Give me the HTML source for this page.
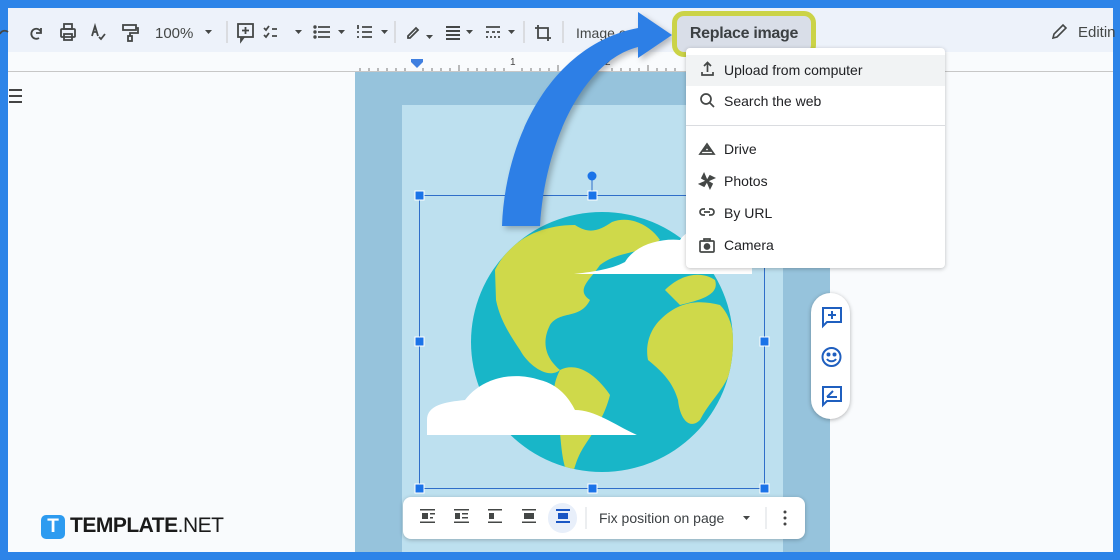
<!DOCTYPE html>
<html><head><meta charset="utf-8"><style>
*{margin:0;padding:0;box-sizing:border-box}
body{width:1120px;height:560px;overflow:hidden;background:#2d84e8;font-family:"Liberation Sans",Arial,sans-serif;position:relative}
.abs{position:absolute}
.ico{fill:none;stroke:#444746;stroke-width:1.8}
</style></head><body>
<div class="abs" style="left:8px;top:8px;width:1105px;height:544px;background:#f9fbfd;overflow:hidden">
 <div class="abs" style="left:0;top:0;width:1105px;height:44px;background:#edf2fa"></div>
 <div class="abs" style="left:0;top:44px;width:1105px;height:20px;background:#f9fbfd;border-bottom:1px solid #c7c7c7"></div>
 <div class="abs" style="left:347px;top:64px;width:475px;height:490px;background:#96c3dc"></div>
 <div class="abs" style="left:394px;top:97px;width:381px;height:460px;background:#bde0ef"></div>
</div>

<svg class="abs" style="left:0;top:8px" width="680" height="70">
 <g class="ico">
  <path d="M0 26 a5 5 0 0 1 8 -2"/>
  <path d="M39 30 a5 5 0 1 1 2 -6 M41 20 v5 h-5"/>
  <rect x="61" y="21" width="14" height="8" rx="1"/><rect x="64" y="16" width="8" height="5"/><rect x="64" y="26" width="8" height="6"/>
  <path d="M92 28 l3 -10 l3 10 M94 24 h3 M99 29 l2 2 l4 -5"/>
  <rect x="123" y="17" width="13" height="5"/><path d="M136 20 h2 v5 h-8 v3"/><rect x="128" y="28" width="4" height="5"/>
  <rect x="238" y="16" width="15" height="13"/><path d="M241 29 v4 l3 -4 M245.5 19 v7 M242 22.5 h7"/>
  <path d="M264 20 l2 2 l3 -4 M264 27 l2 2 l3 -4 M272 21 h5 M272 28 h5"/>
  <path d="M318 19 h12 M318 24 h12 M318 29 h12"/><circle cx="315" cy="19" r=".8"/><circle cx="315" cy="24" r=".8"/><circle cx="315" cy="29" r=".8"/>
  <path d="M362 19 h10 M362 24 h10 M362 29 h10 M358 17 v4 M357 24 h2 M357 29 h2"/>
  <path d="M408 28 l8 -8 l2 2 l-8 8 h-2z"/>
  <path d="M446 19 h14 M446 23 h14 M446 27 h14 M446 31 h14" stroke-width="2"/>
  <path d="M486 19 h14 M486 24 h3 M492 24 h3 M497 24 h3 M486 29 h2 M490 29 h2 M494 29 h2 M498 29 h2"/>
  <path d="M538 17 v13 h13 M535 20 h13 v13"/>
 </g>
 <g fill="#444746">
  <path d="M205 22 h7 l-3.5 4z M295 22 h7 l-3.5 4z M338 22 h7 l-3.5 4z M381 22 h7 l-3.5 4z M426 27 h7 l-3.5 4z M466 22 h7 l-3.5 4z M508 22 h7 l-3.5 4z"/>
 </g>
 <path d="M227 13 v22 M395 13 v22 M524 13 v22 M563 13 v22" stroke="#c7c7c7"/>
 <text x="155" y="30" font-size="15" fill="#444746">100%</text>
 <text x="576" y="30" font-size="14" fill="#444746">Image op</text>
 <g stroke="#777" stroke-width="1">
  <path d="M360 63 v-3 M369 63 v-3 M378 63 v-3 M387 63 v-3 M396 63 v-3 M405 63 v-3 M423 63 v-3 M432 63 v-3 M441 63 v-3 M450 63 v-3 M459 63 v-6 M468 63 v-3 M477 63 v-3 M486 63 v-3 M495 63 v-3 M504 63 v-3 M522 63 v-3 M531 63 v-3 M540 63 v-3 M549 63 v-3 M558 63 v-6 M567 63 v-3 M576 63 v-3 M585 63 v-3 M594 63 v-3 M612 63 v-3 M621 63 v-3 M630 63 v-3 M639 63 v-3 M648 63 v-6 M657 63 v-3 M666 63 v-3 M675 63 v-3"/>
 </g>
 <text x="510" y="57" font-size="10" fill="#444">1</text>
 <text x="605" y="57" font-size="10" fill="#444">2</text>
 <path d="M411 51 h12 v3 l-6 6 l-6 -6z" fill="#3f7fe0"/>
</svg>
<div class="abs" style="left:9px;top:89px;width:13px;height:2px;background:#444"></div>
<div class="abs" style="left:9px;top:95px;width:13px;height:2px;background:#444"></div>
<div class="abs" style="left:9px;top:101px;width:13px;height:2px;background:#444"></div>

<svg class="abs" style="left:1050px;top:22px" width="20" height="20"><path d="M3 16 l1 -4 l9 -9 l3 3 l-9 9z" fill="none" stroke="#444746" stroke-width="1.6"/></svg>
<div class="abs" style="left:1078px;top:24px;font-size:15px;color:#444746">Editin</div>

<svg class="abs" style="left:0;top:0" width="1120" height="560">
 <defs><clipPath id="g"><ellipse cx="602" cy="342" rx="131" ry="130"/></clipPath></defs>
 <ellipse cx="602" cy="342" rx="131" ry="130" fill="#18b6c8"/>
 <g clip-path="url(#g)" fill="#cfd94a">
  <path d="M495 270 C510 240 540 225 575 225 C590 235 600 230 612 222 C630 215 650 225 660 240 C640 255 620 250 600 265 C590 280 575 290 590 300 C580 320 560 310 550 325 C540 345 548 360 560 370 C548 380 528 365 520 350 C510 335 500 320 496 300 Z"/>
  <path d="M560 370 C580 360 600 380 610 395 C605 415 595 430 585 445 C575 460 575 470 570 480 C560 460 562 440 558 420 C552 400 552 385 560 370Z"/>
  <path d="M660 320 C680 300 700 300 720 305 C735 320 735 345 733 365 C725 390 710 400 700 420 C690 430 680 420 678 400 C672 380 660 370 648 360 C645 345 650 330 660 320Z"/>
  <path d="M665 290 C680 275 700 270 715 280 C720 295 700 300 680 305 Z"/>
 </g>
 <path d="M427 435 V420 C427 405 445 402 465 400 C480 380 510 370 540 380 C560 385 570 400 575 410 C595 410 615 425 637 435 Z" fill="#fff"/>
 <path d="M574 274 C590 272 610 270 625 262 C635 245 660 238 680 240 C690 225 720 220 752 232 V274 Z" fill="#fff"/>
 <rect x="419.5" y="195.5" width="345" height="293" fill="none" stroke="#2f6ec9" stroke-width="1"/>
 <path d="M592 176 v20" stroke="#2f6ec9"/>
 <circle cx="592" cy="176" r="4.5" fill="#1a73e8"/>
 <g fill="#1a73e8" stroke="#fff" stroke-width="1">
  <rect x="415" y="191" width="9" height="9"/><rect x="588" y="191" width="9" height="9"/><rect x="760" y="191" width="9" height="9"/>
  <rect x="415" y="337" width="9" height="9"/><rect x="760" y="337" width="9" height="9"/>
  <rect x="415" y="484" width="9" height="9"/><rect x="588" y="484" width="9" height="9"/><rect x="760" y="484" width="9" height="9"/>
 </g>
 <path d="M502 226 C505 140 550 45 638 28 L638 12 L672 35 L638 58 L638 47 C585 60 545 140 540 226 Z" fill="#2d7fe6" style="filter:drop-shadow(3px 3px 3px rgba(0,0,0,.25))"/>
</svg>

<div class="abs" style="left:672px;top:11px;width:144px;height:46px;border:5px solid #cbd347;border-radius:12px;background:#d9dee8;font-size:16px;font-weight:bold;color:#3c4043;text-align:center;line-height:36px;letter-spacing:-0.3px">Replace image</div>

<div class="abs" style="left:686px;top:48px;width:259px;height:220px;background:#fff;border-radius:4px;box-shadow:0 1px 4px rgba(0,0,0,.25);font-size:14px;color:#202124">
 <div class="abs" style="left:0;top:7px;width:259px;height:31px;background:#f1f3f4"></div>
 <div class="abs" style="left:38px;top:14px">Upload from computer</div>
 <div class="abs" style="left:38px;top:45px">Search the web</div>
 <div class="abs" style="left:0;top:77px;width:259px;height:1px;background:#dadce0"></div>
 <div class="abs" style="left:38px;top:93px">Drive</div>
 <div class="abs" style="left:38px;top:125px">Photos</div>
 <div class="abs" style="left:38px;top:157px">By URL</div>
 <div class="abs" style="left:38px;top:189px">Camera</div>
 <svg class="abs" style="left:12px;top:10px" width="20" height="200" fill="none" stroke="#444746" stroke-width="1.7">
  <path d="M4 14 v3 h11 v-3 M9.5 14 v-9 M6 8 l3.5 -3.5 l3.5 3.5"/>
  <circle cx="8" cy="41" r="5"/><path d="M12 45 l4 4"/>
  <path d="M2 96 l7 -10 l7 10 z M6 93 l3 -4 l3 4z"/>
  <path d="M9 123 l-5 -3 l2 -4z M9 123 l3 -5 l4 2z M9 123 l5 3 l-2 4z M9 123 l-3 5 l-4 -2z" fill="#444746"/>
  <path d="M7 151 h-2 a3 3 0 0 0 0 6 h2 M11 151 h2 a3 3 0 0 1 0 6 h-2 M6 154 h6"/>
  <rect x="2" y="183" width="14" height="11" rx="1"/><circle cx="9" cy="188.5" r="2.5" fill="#444746"/><path d="M6 183 v-2 h6 v2"/>
 </svg>
</div>

<div class="abs" style="left:811px;top:293px;width:39px;height:126px;background:#fff;border-radius:20px;box-shadow:0 1px 4px rgba(0,0,0,.3)"></div>
<svg class="abs" style="left:811px;top:293px" width="40" height="126" fill="none" stroke="#1f5fbf" stroke-width="2">
 <path d="M12 15 h18 v14 h-14 l-4 4z M21 18 v8 M17 22 h8"/>
 <circle cx="20.5" cy="64" r="9"/><circle cx="17.5" cy="61.5" r="1" fill="#1f5fbf"/><circle cx="23.5" cy="61.5" r="1" fill="#1f5fbf"/><path d="M16 66 a5 4 0 0 0 9 0"/>
 <path d="M12 94 h18 v14 h-14 l-4 4z M16 104 l6 -6 M16 104 h10"/>
</svg>

<div class="abs" style="left:403px;top:497px;width:402px;height:42px;background:#fff;border-radius:8px;box-shadow:0 1px 4px rgba(0,0,0,.25)"></div>
<div class="abs" style="left:548px;top:503px;width:29px;height:30px;border-radius:15px;background:#e8effa"></div>
<svg class="abs" style="left:403px;top:497px" width="402" height="42">
 <g fill="#444746">
  <rect x="19" y="16" width="6" height="6"/><rect x="17" y="12" width="15" height="1.5"/><rect x="17" y="24.5" width="15" height="1.5"/><rect x="27" y="16" width="5" height="1.5"/><rect x="27" y="20" width="3" height="1.5"/>
  <rect x="52" y="16" width="5" height="6"/><rect x="51" y="12" width="15" height="1.5"/><rect x="51" y="24.5" width="15" height="1.5"/><rect x="59" y="16" width="6" height="1.5"/><rect x="59" y="20" width="6" height="1.5"/>
  <rect x="86" y="16" width="5" height="6"/><rect x="85" y="12" width="14" height="1.5"/><rect x="85" y="24.5" width="14" height="1.5"/>
  <rect x="119" y="12" width="14" height="1.5"/><rect x="121" y="16" width="10" height="6"/><rect x="119" y="24.5" width="14" height="1.5"/>
 </g>
 <g fill="#1a56c4"><rect x="153" y="12" width="14" height="2"/><rect x="155" y="16" width="10" height="6"/><rect x="153" y="24" width="14" height="2"/></g>
 <path d="M183 10 v22 M363 10 v22" stroke="#dadce0"/>
 <text x="196" y="26" font-size="14" fill="#3c4043">Fix position on page</text>
 <path d="M340 19 h7 l-3.5 4z" fill="#444746"/>
 <circle cx="382" cy="15" r="1.5" fill="#444"/><circle cx="382" cy="21" r="1.5" fill="#444"/><circle cx="382" cy="27" r="1.5" fill="#444"/>
</svg>

<div class="abs" style="left:41px;top:515px;width:24px;height:24px;background:#2d9bf0;border-radius:5px;color:#fff;font-weight:bold;font-size:19px;text-align:center;line-height:24px">T</div>
<div class="abs" style="left:70px;top:514px;font-size:21px;color:#1a1a1a;letter-spacing:-0.5px"><b>TEMPLATE</b>.NET</div>
</body></html>
